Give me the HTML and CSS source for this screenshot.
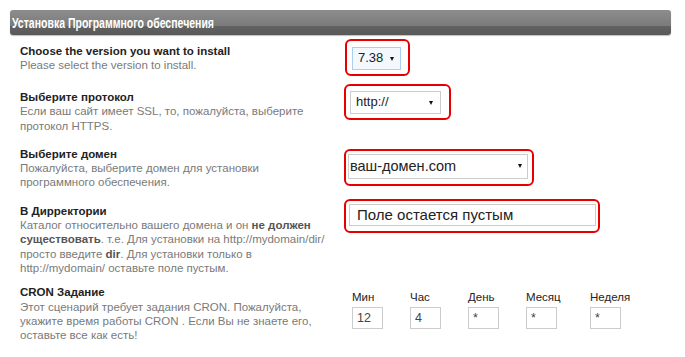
FILE: index.html
```html
<!DOCTYPE html>
<html lang="ru">
<head>
  <meta charset="UTF-8">
  <meta name="viewport" content="width=device-width, initial-scale=1.0">
  <title>Установка Программного обеспечения</title>
  <link rel="stylesheet" href="styles.css">
</head>
<body>
  <div class="panel">
    <div class="panel-head"><span class="panel-title">Установка Программного обеспечения</span></div>

    <div class="form">
      <!-- Version -->
      <div class="row">
        <div class="info">
          <div class="label">Choose the version you want to install</div>
          <div class="desc">Please select the version to install.</div>
        </div>
        <div class="field">
          <div class="mark mark-version">
            <div class="select select-version"><span>7.38</span><i class="arrow"></i></div>
          </div>
        </div>
      </div>

      <!-- Protocol -->
      <div class="row">
        <div class="info">
          <div class="label">Выберите протокол</div>
          <div class="desc">Если ваш сайт имеет SSL, то, пожалуйста, выберите протокол HTTPS.</div>
        </div>
        <div class="field">
          <div class="mark mark-protocol">
            <div class="select select-protocol"><span>http://</span><i class="arrow"></i></div>
          </div>
        </div>
      </div>

      <!-- Domain -->
      <div class="row">
        <div class="info">
          <div class="label">Выберите домен</div>
          <div class="desc">Пожалуйста, выберите домен для установки программного обеспечения.</div>
        </div>
        <div class="field">
          <div class="mark mark-domain">
            <div class="select select-domain"><span>ваш-домен.com</span><i class="arrow"></i></div>
          </div>
        </div>
      </div>

      <!-- Directory -->
      <div class="row row-dir">
        <div class="info">
          <div class="label">В Дирректории</div>
          <div class="desc">Каталог относительно вашего домена и он <b>не должен существовать</b>. т.е. Для установки на http://mydomain/dir/ просто введите <b>dir</b>. Для установки только в http://mydomain/ оставьте поле пустым.</div>
        </div>
        <div class="field">
          <div class="mark mark-dir">
            <input type="text" class="text-input" value="Поле остается пустым">
          </div>
        </div>
      </div>

      <!-- Cron -->
      <div class="row">
        <div class="info">
          <div class="label">CRON Задание</div>
          <div class="desc">Этот сценарий требует задания CRON. Пожалуйста, укажите время работы CRON . Если Вы не знаете его, оставьте все как есть!</div>
        </div>
        <div class="field">
          <div class="cron">
            <div class="cron-col"><div class="cron-label">Мин</div><input class="cron-input" value="12"></div>
            <div class="cron-col"><div class="cron-label">Час</div><input class="cron-input" value="4"></div>
            <div class="cron-col"><div class="cron-label">День</div><input class="cron-input" value="*"></div>
            <div class="cron-col"><div class="cron-label">Месяц</div><input class="cron-input" value="*"></div>
            <div class="cron-col"><div class="cron-label">Неделя</div><input class="cron-input" value="*"></div>
          </div>
        </div>
      </div>
    </div>
  </div>
</body>
</html>
```

FILE: styles.css
```css
body {
  margin: 0;
  padding: 10px;
  background: #fff;
  font-family: "Liberation Sans", Arial, sans-serif;
  font-size: 11.5px;
  color: #222;
}

.panel {
  width: 661px;
}

.panel-head {
  height: 25px;
  line-height: 25px;
  padding-left: 2px;
  border-radius: 3px;
  background: linear-gradient(#8d8d8d, #7b7b7b 62%, #626262 64%, #585858);
  box-shadow: 0 1px 1px rgba(0, 0, 0, 0.25);
  white-space: nowrap;
}

.panel-title {
  display: inline-block;
  color: #fff;
  font-weight: bold;
  font-size: 15px;
  transform: scaleX(0.7);
  transform-origin: left center;
}

.form {
  padding: 9px 10px 0;
}

.row {
  display: grid;
  grid-template-columns: 324px auto;
  margin-bottom: 14px;
  line-height: 14.3px;
}

.row-dir {
  margin-bottom: 10px;
}

.info {
  padding-right: 14px;
}

.label {
  font-weight: bold;
  color: #222;
}

.desc {
  color: #7a7a7a;
}

.desc b {
  color: #555;
}

/* red highlight boxes */
.mark {
  display: inline-block;
  border: 2px solid #e80000;
  border-radius: 6px;
}

.mark-version {
  margin: -5px 0 0 1px;
  padding: 6px 7px 4px 5px;
}

.mark-protocol {
  margin-top: -6px;
  padding: 5px 8px 4px 4px;
}

.mark-domain {
  margin-top: 2px;
  padding: 3px 4px 5px 2px;
}

.mark-dir {
  margin-top: -5px;
  padding: 3px 2px 5px 3px;
}

.select {
  display: flex;
  align-items: center;
  justify-content: space-between;
  box-sizing: border-box;
  height: 23px;
  border: 1px solid #ccc;
  background: #fff;
  color: #222;
  font-size: 13px;
}

.select-version {
  width: 49px;
  padding: 0 6px 0 5px;
  border-color: #a9d0f0;
  background: #f4f8fc;
}

.select-protocol {
  width: 91px;
  padding: 0 7px 0 5px;
}

.select-domain {
  width: 180px;
  height: 25px;
  padding: 0 5px 0 1px;
  font-size: 14.5px;
}

.arrow {
  width: 0;
  height: 0;
  border-left: 2.5px solid transparent;
  border-right: 2.5px solid transparent;
  border-top: 4px solid #111;
}

.text-input {
  display: block;
  box-sizing: border-box;
  width: 247px;
  height: 22px;
  margin: 0;
  padding: 0 7px;
  border: 1px solid #ccc;
  font-family: "Liberation Sans", Arial, sans-serif;
  font-size: 15px;
  color: #222;
}

/* cron fields */
.cron {
  display: grid;
  grid-template-columns: 58px 58px 58px 64px auto;
  padding: 5px 0 0 8px;
}

.cron-label {
  color: #222;
  line-height: 14px;
  margin-bottom: 3px;
}

.cron-input {
  display: block;
  box-sizing: border-box;
  width: 31px;
  height: 22px;
  margin: 0;
  padding: 0 4px;
  border: 1px solid #ccc;
  font-family: "Liberation Sans", Arial, sans-serif;
  font-size: 12.5px;
  color: #444;
}
```
